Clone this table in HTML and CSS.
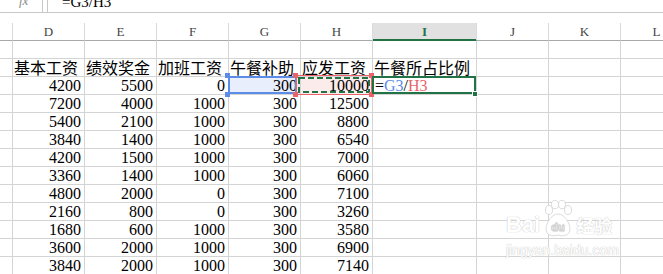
FILE: index.html
```html
<!DOCTYPE html>
<html>
<head>
<meta charset="utf-8">
<link rel="stylesheet" href="styles.css">
</head>
<body>
<div class="page">
  <div class="fbar">
    <div class="fx-box"><span class="fx">fx</span></div>
    <div class="fval"><span class="ftext">=G3/H3</span></div>
  </div>
  <div class="sheet-wrap">
    <div class="sheet">
      <div class="ch corner"></div><div class="ch">D</div><div class="ch">E</div><div class="ch">F</div><div class="ch">G</div><div class="ch">H</div><div class="ch active">I</div><div class="ch">J</div><div class="ch">K</div><div class="ch">L</div>

      <div class="rh"></div><div class="c"></div><div class="c"></div><div class="c"></div><div class="c"></div><div class="c"></div><div class="c"></div><div class="c"></div><div class="c"></div><div class="c"></div>

      <div class="rh"></div><div class="c t">基本工资</div><div class="c t">绩效奖金</div><div class="c t">加班工资</div><div class="c t">午餐补助</div><div class="c t">应发工资</div><div class="c t">午餐所占比例</div><div class="c"></div><div class="c"></div><div class="c"></div>

      <div class="rh"></div><div class="c n">4200</div><div class="c n">5500</div><div class="c n">0</div><div class="c n g3">300</div><div class="c n h3">10000</div><div class="c f"><span>=</span><span class="ref-g">G3</span><span>/</span><span class="ref-h">H3</span></div><div class="c"></div><div class="c"></div><div class="c"></div>

      <div class="rh"></div><div class="c n">7200</div><div class="c n">4000</div><div class="c n">1000</div><div class="c n">300</div><div class="c n">12500</div><div class="c"></div><div class="c"></div><div class="c"></div><div class="c"></div>
      <div class="rh"></div><div class="c n">5400</div><div class="c n">2100</div><div class="c n">1000</div><div class="c n">300</div><div class="c n">8800</div><div class="c"></div><div class="c"></div><div class="c"></div><div class="c"></div>
      <div class="rh"></div><div class="c n">3840</div><div class="c n">1400</div><div class="c n">1000</div><div class="c n">300</div><div class="c n">6540</div><div class="c"></div><div class="c"></div><div class="c"></div><div class="c"></div>
      <div class="rh"></div><div class="c n">4200</div><div class="c n">1500</div><div class="c n">1000</div><div class="c n">300</div><div class="c n">7000</div><div class="c"></div><div class="c"></div><div class="c"></div><div class="c"></div>
      <div class="rh"></div><div class="c n">3360</div><div class="c n">1400</div><div class="c n">1000</div><div class="c n">300</div><div class="c n">6060</div><div class="c"></div><div class="c"></div><div class="c"></div><div class="c"></div>
      <div class="rh"></div><div class="c n">4800</div><div class="c n">2000</div><div class="c n">0</div><div class="c n">300</div><div class="c n">7100</div><div class="c"></div><div class="c"></div><div class="c"></div><div class="c"></div>
      <div class="rh"></div><div class="c n">2160</div><div class="c n">800</div><div class="c n">0</div><div class="c n">300</div><div class="c n">3260</div><div class="c"></div><div class="c"></div><div class="c"></div><div class="c"></div>
      <div class="rh"></div><div class="c n">1680</div><div class="c n">600</div><div class="c n">1000</div><div class="c n">300</div><div class="c n">3580</div><div class="c"></div><div class="c"></div><div class="c"></div><div class="c"></div>
      <div class="rh"></div><div class="c n">3600</div><div class="c n">2000</div><div class="c n">1000</div><div class="c n">300</div><div class="c n">6900</div><div class="c"></div><div class="c"></div><div class="c"></div><div class="c"></div>
      <div class="rh"></div><div class="c n">3840</div><div class="c n">2000</div><div class="c n">1000</div><div class="c n">300</div><div class="c n">7140</div><div class="c"></div><div class="c"></div><div class="c"></div><div class="c"></div>
    </div>

    <svg class="overlay" width="663" height="251" viewBox="0 23 663 251">
      <!-- G3 reference (blue) -->
      <rect x="229" y="77" width="67" height="16" fill="none" stroke="#5b8ce8" stroke-width="2"/>
      <rect x="225" y="73" width="5" height="5" fill="#5b8ce8"/>
      <rect x="225" y="92" width="5" height="5" fill="#5b8ce8"/>
      <!-- H3 reference (red, marching ants) -->
      <rect x="296.5" y="75.5" width="75" height="19" fill="none" stroke="#e8646a" stroke-width="1"/>
      <rect x="299" y="78" width="70" height="14" fill="none" stroke="#217346" stroke-width="2" stroke-dasharray="6 3"/>
      <rect x="293" y="73" width="5" height="5" fill="#e8646a"/>
      <rect x="369" y="73" width="5" height="5" fill="#e8646a"/>
      <rect x="293" y="92" width="5" height="5" fill="#e8646a"/>
      <rect x="369" y="92" width="5" height="5" fill="#e8646a"/>
      <!-- I3 active cell -->
      <rect x="373" y="77" width="102" height="16" fill="none" stroke="#217346" stroke-width="2"/>
      <rect x="472" y="91" width="6" height="6" fill="#ffffff"/>
      <rect x="473" y="92" width="4" height="4" fill="#217346"/>
    </svg>

    <div class="wm">
      <div class="wm-top">
        <span class="wm-bai">Bai</span>
        <svg class="wm-paw" width="30" height="38" viewBox="0 0 30 38">
          <g fill="#ffffff" stroke="#d2d2d2" stroke-width="0.8">
            <ellipse cx="6" cy="10" rx="3.5" ry="4.5"/>
            <ellipse cx="12" cy="4.5" rx="3.5" ry="4.2"/>
            <ellipse cx="19" cy="4.5" rx="3.5" ry="4.2"/>
            <ellipse cx="25" cy="10" rx="3.5" ry="4.5"/>
            <path d="M15 14 C8 14 3 24 3 29 C3 35 9 37 15 35 C21 37 27 35 27 29 C27 24 22 14 15 14 Z"/>
          </g>
          <text x="15" y="31" text-anchor="middle" class="wm-du">du</text>
        </svg>
        <span class="wm-jy">经验</span>
      </div>
      <div class="wm-url">jingyan.baidu.com</div>
    </div>
  </div>
</div>
</body>
</html>
```

FILE: styles.css
```css
html, body {
  margin: 0;
  padding: 0;
  background: #ffffff;
}

.page {
  width: 663px;
  height: 274px;
  overflow: hidden;
  position: relative;
}

.fbar {
  display: flex;
  height: 12px;
  border-bottom: 1px solid #c8c8c8;
  overflow: hidden;
}

.fx-box {
  width: 43px;
  border-right: 1px solid #c8c8c8;
  box-sizing: border-box;
  padding-left: 19px;
  line-height: 0;
}

.fx {
  font-family: "Liberation Serif", serif;
  font-style: italic;
  font-size: 13px;
  color: #8a8a8a;
}

.fval {
  margin-left: 4px;
  flex: 1;
  border-left: 1px solid #c8c8c8;
  padding-left: 14px;
  line-height: 4px;
}

.ftext {
  font-family: "Liberation Serif", serif;
  font-size: 15px;
  color: #000;
}

.sheet-wrap {
  position: relative;
  margin-top: 10px;
  height: 251px;
  overflow: hidden;
}

.sheet {
  display: grid;
  grid-template-columns: 13px 72px 72px 72px 72px 72px 104px 72px 72px 72px;
  grid-auto-rows: 18px;
  width: 713px;
}

.ch {
  box-sizing: border-box;
  border-right: 1px solid #dadada;
  border-bottom: 1px solid #a9a9a9;
  font-family: "Liberation Serif", serif;
  font-size: 13px;
  line-height: 17px;
  text-align: center;
  color: #444;
}

.ch.active {
  background: #e1e1e1;
  color: #217346;
  font-weight: bold;
  border-bottom-color: #217346;
  box-shadow: inset 0 -1px 0 #217346;
}

.rh, .c {
  box-sizing: border-box;
  border-right: 1px solid #d4d4d4;
  border-bottom: 1px solid #d4d4d4;
  overflow: hidden;
  white-space: nowrap;
  font-family: "Liberation Serif", "Noto Sans CJK SC", serif;
  font-size: 16px;
  line-height: 17px;
  color: #000;
}

.c.t {
  padding-left: 1px;
  overflow: visible;
  font-family: "Noto Sans CJK SC", sans-serif;
  font-size: 16px;
}

.c.n {
  text-align: right;
  padding-right: 3px;
}

.c.g3 {
  background: #e8eefb;
}

.c.h3 {
  background: #fbebea;
}

.c.f {
  padding-left: 2px;
  overflow: visible;
}

.ref-g {
  color: #5b8ce8;
}

.ref-h {
  color: #e8646a;
}

.overlay {
  position: absolute;
  left: 0;
  top: 0;
  pointer-events: none;
}

.wm {
  position: absolute;
  left: 506px;
  top: 175px;
  width: 120px;
  color: #ffffff;
  font-family: "Liberation Sans", sans-serif;
  font-weight: bold;
  text-shadow: 0 0 1px #c8c8c8, 0 0 1px #c8c8c8;
}

.wm-top {
  display: flex;
  align-items: flex-end;
  height: 40px;
}

.wm-bai {
  font-size: 22px;
  line-height: 22px;
  margin-bottom: 2px;
}

.wm-paw {
  margin-left: 3px;
}

.wm-du {
  font-family: "Liberation Sans", sans-serif;
  font-weight: bold;
  font-size: 11px;
  fill: #ffffff;
  stroke: #d2d2d2;
  stroke-width: 0.4;
}

.wm-jy {
  font-family: "Noto Sans CJK SC", sans-serif;
  font-size: 18px;
  line-height: 22px;
  margin-left: 3px;
  margin-bottom: 2px;
}

.wm-url {
  font-size: 14px;
  line-height: 16px;
  margin-top: 4px;
  font-weight: normal;
}
```
